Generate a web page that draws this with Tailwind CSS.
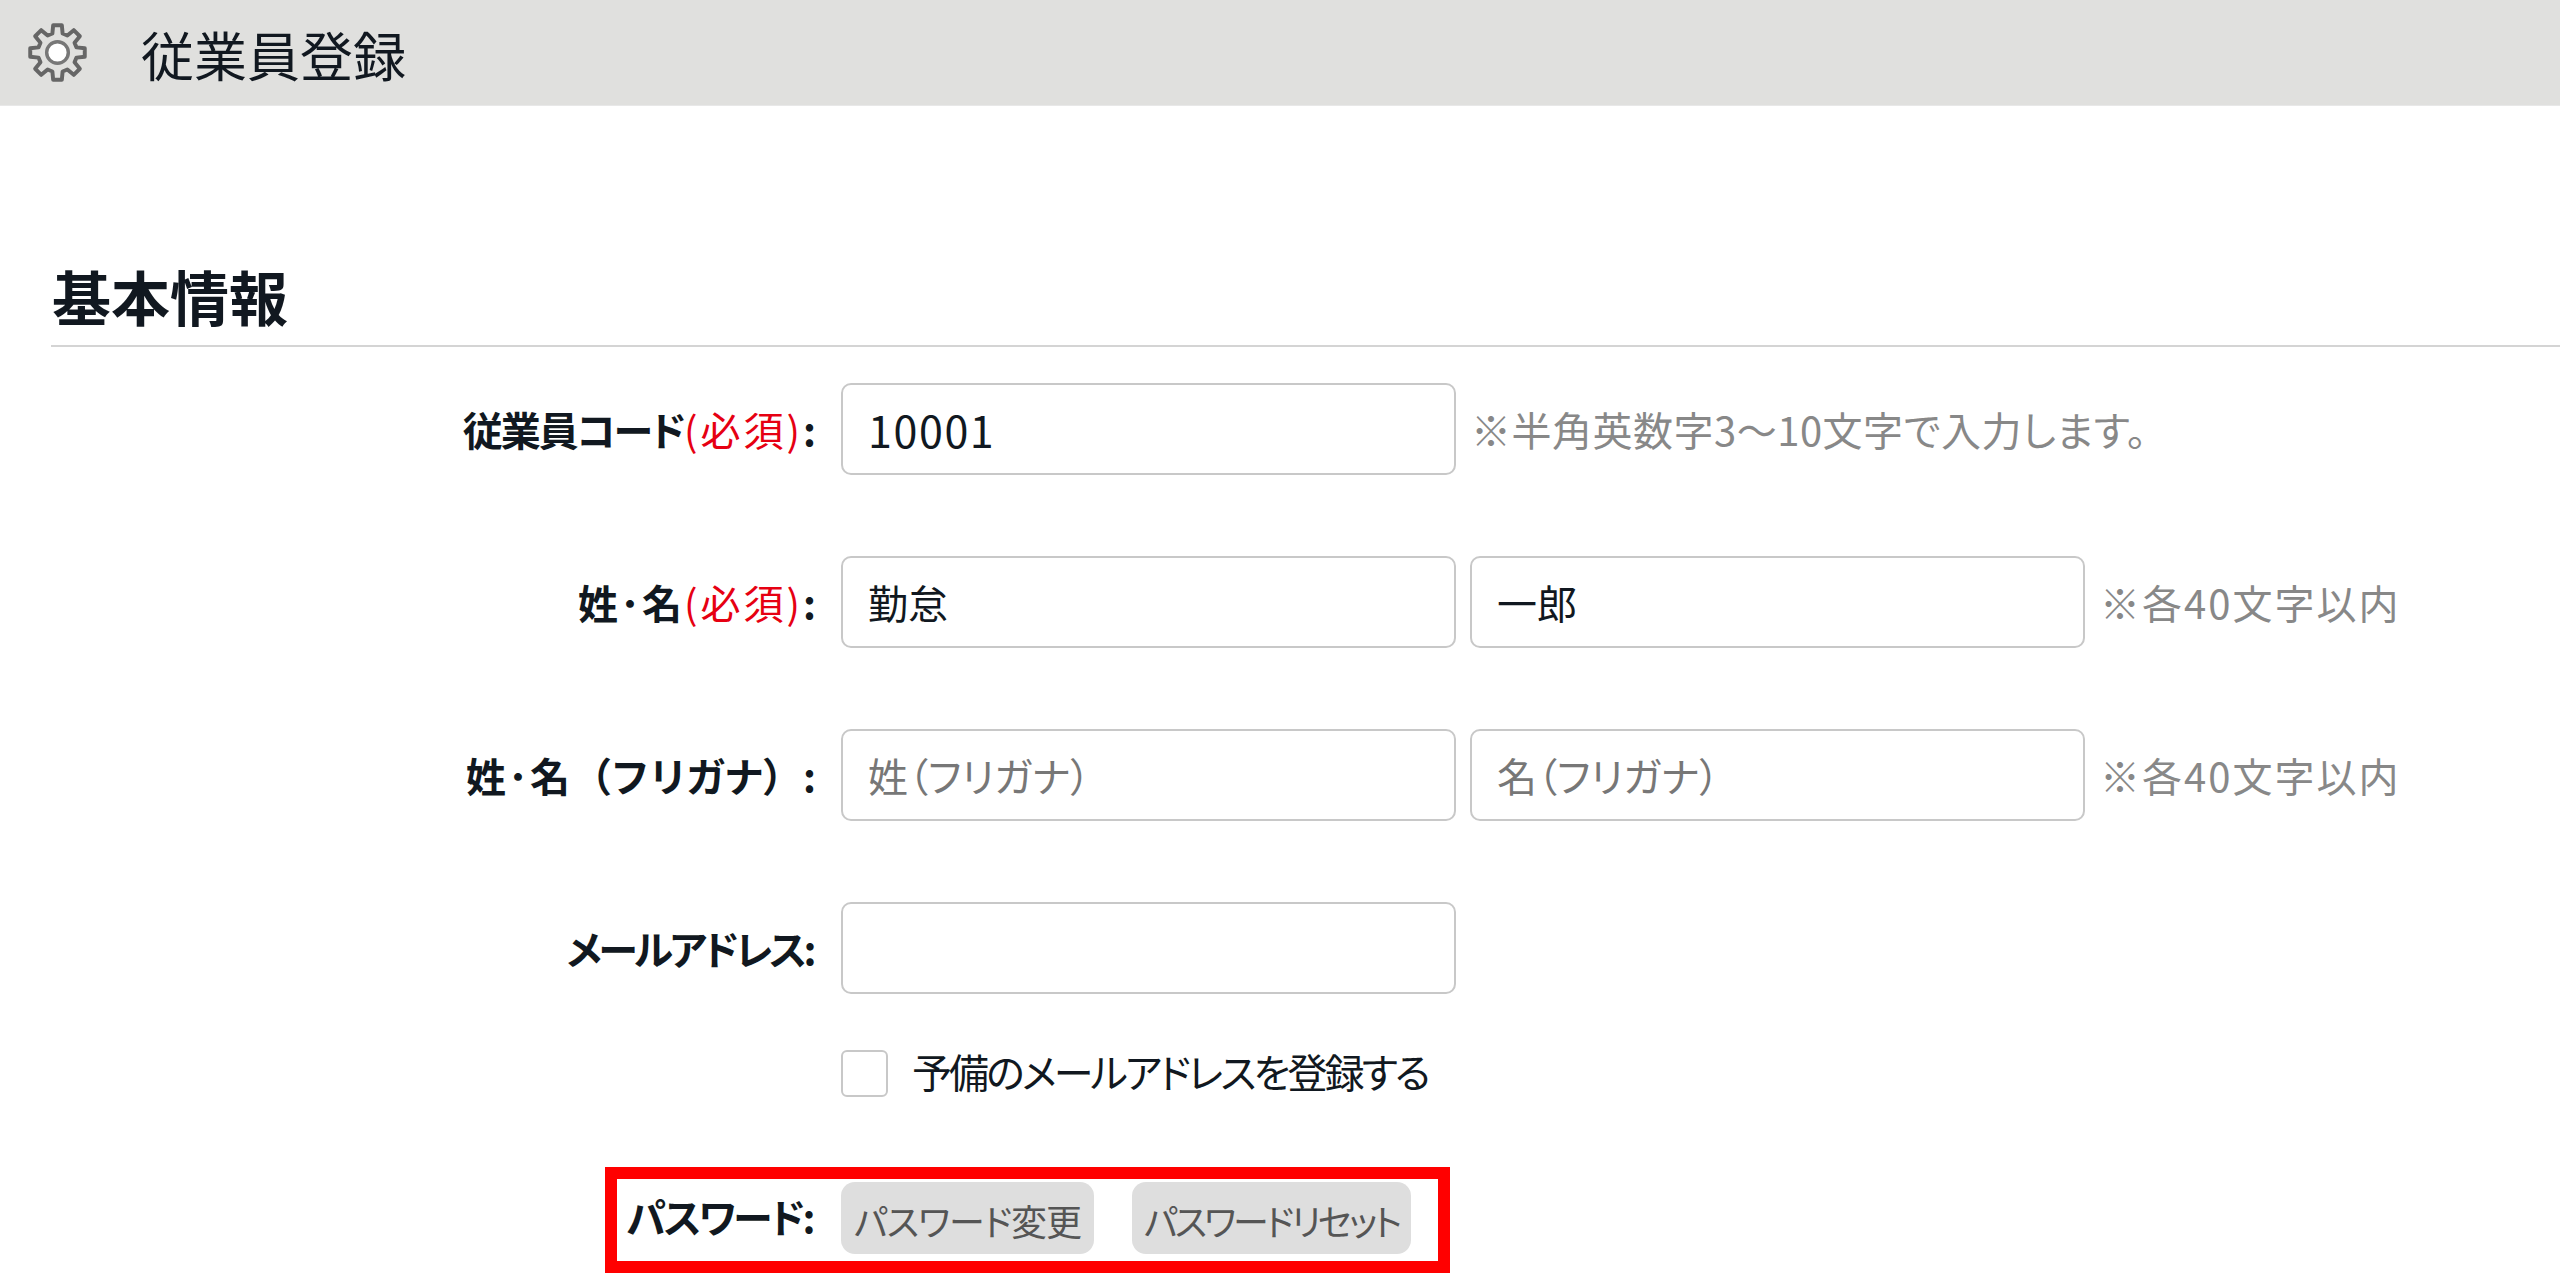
<!DOCTYPE html>
<html lang="ja">
<head>
    <meta charset="UTF-8">
    <title>従業員登録</title>
    <script src="https://cdn.jsdelivr.net/npm/@tailwindcss/browser@4"></script>
</head>
<body class="relative h-[1277px] overflow-hidden bg-white text-[#111820] font-['Noto_Sans_CJK_JP',sans-serif] [font-feature-settings:'palt']">
    <!-- ヘッダー -->
    <header class="flex items-center h-[106px] pl-[26px] bg-[#e0e0de] border-b border-[#e8e8e8]">
        <svg class="w-[63px] h-[63px] blur-[0.6px]" viewBox="-32 -32 64 64">
            <path fill="#e0e0de" stroke="#666" stroke-width="4" stroke-linejoin="round" d="M-5.2 -19.3L-4.4 -27.7L4.4 -27.7L5.2 -19.3L10 -17.3L16.5 -22.7L22.7 -16.5L17.3 -10L19.3 -5.2L27.7 -4.4L27.7 4.4L19.3 5.2L17.3 10L22.7 16.5L16.5 22.7L10 17.3L5.2 19.3L4.4 27.7L-4.4 27.7L-5.2 19.3L-10 17.3L-16.5 22.7L-22.7 16.5L-17.3 10L-19.3 5.2L-27.7 4.4L-27.7 -4.4L-19.3 -5.2L-17.3 -10L-22.7 -16.5L-16.5 -22.7L-10 -17.3Z"/>
            <circle r="11" fill="#fff" stroke="#777" stroke-width="3.5"/>
        </svg>
        <h1 class="ml-[52px] pt-[3px] text-[53px] leading-none font-normal">従業員登録</h1>
    </header>

    <main class="pl-[51px]">
        <h2 class="mt-[152px] pl-px h-[89px] text-[59px] leading-[75px] font-bold border-b-2 border-[#d4d4d4]">基本情報</h2>

        <!-- 従業員コード -->
        <div class="flex items-center mt-[36px]">
            <label class="w-[765px] text-right text-[40px] font-bold"><span class="tracking-[-2px]">従業員コード</span><span class="font-normal tracking-[3px] text-[#e60012]">(必須)</span>:</label>
            <input type="text" value="10001" class="w-[615px] h-[92px] ml-[25px] px-[25px] text-[43px] tracking-[1.6px] bg-white border-2 border-[#c8c8c8] rounded-[10px]">
            <span class="ml-[15px] text-[40px] tracking-[0.5px] text-[#888]">※半角英数字3～10文字で入力します。</span>
        </div>

        <!-- 姓・名 -->
        <div class="flex items-center mt-[81px]">
            <label class="w-[765px] text-right text-[40px] font-bold"><span class="tracking-[2px]">姓･名</span><span class="font-normal tracking-[3px] text-[#e60012]">(必須)</span>:</label>
            <input type="text" value="勤怠" class="w-[615px] h-[92px] ml-[25px] px-[25px] text-[40px] bg-white border-2 border-[#c8c8c8] rounded-[10px]">
            <input type="text" value="一郎" class="w-[615px] h-[92px] ml-[14px] px-[25px] text-[40px] bg-white border-2 border-[#c8c8c8] rounded-[10px]">
            <span class="ml-[15px] text-[40px] tracking-[2px] text-[#888]">※各40文字以内</span>
        </div>

        <!-- フリガナ -->
        <div class="flex items-center mt-[81px]">
            <label class="w-[765px] text-right text-[40px] font-bold"><span class="tracking-[2px]">姓･名</span><span class="[font-feature-settings:normal] tracking-[-2px]">（フリガナ）</span><span class="ml-[3px]">:</span></label>
            <input type="text" placeholder="姓（フリガナ）" class="w-[615px] h-[92px] ml-[25px] px-[25px] text-[40px] bg-white border-2 border-[#c8c8c8] rounded-[10px] placeholder:text-[#777]">
            <input type="text" placeholder="名（フリガナ）" class="w-[615px] h-[92px] ml-[14px] px-[25px] text-[40px] bg-white border-2 border-[#c8c8c8] rounded-[10px] placeholder:text-[#777]">
            <span class="ml-[15px] text-[40px] tracking-[2px] text-[#888]">※各40文字以内</span>
        </div>

        <!-- メールアドレス -->
        <div class="flex items-center mt-[81px]">
            <label class="w-[765px] pr-[3px] text-right text-[40px] font-bold tracking-[-3.4px]">メールアドレス:</label>
            <input type="text" class="w-[615px] h-[92px] ml-[25px] px-[26px] text-[40px] bg-white border-2 border-[#c8c8c8] rounded-[10px]">
        </div>

        <div class="flex items-center mt-[56px] ml-[790px] h-[47px]">
            <span class="w-[47px] h-[47px] bg-white border-2 border-[#c8c8c8] rounded-[6px]"></span>
            <span class="ml-[24px] pb-[5px] text-[40px] tracking-[-2.9px]">予備のメールアドレスを登録する</span>
        </div>

        <!-- パスワード -->
        <div class="flex items-center mt-[85px]">
            <label class="w-[765px] pr-[3px] pb-[4px] text-right text-[40px] font-bold tracking-[-2.5px]">パスワード:</label>
            <button class="w-[253px] h-[72px] ml-[25px] pt-[4px] whitespace-nowrap text-[36px] tracking-[-1px] text-[#555] bg-[#dedede] rounded-[14px]">パスワード変更</button>
            <button class="w-[279px] h-[72px] ml-[38px] pt-[4px] whitespace-nowrap text-[36px] tracking-[-3px] text-[#555] bg-[#dedede] rounded-[14px]">パスワードリセット</button>
        </div>
    </main>

    <!-- 赤枠 -->
    <div class="absolute left-[605px] top-[1167px] w-[845px] h-[106px] border-[12px] border-[#ff0000]"></div>
</body>
</html>
